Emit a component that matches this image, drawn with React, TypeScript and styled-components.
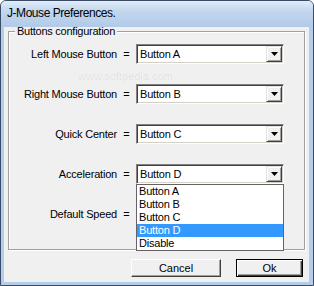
import React from 'react';
import styled, { createGlobalStyle } from 'styled-components';

const GlobalStyle = createGlobalStyle`
  html, body {
    margin: 0;
    padding: 0;
    background: #ffffff;
  }
  body {
    font-family: 'Liberation Sans', Arial, sans-serif;
    font-size: 11px;
    color: #000;
  }
`;

const Window = styled.div`
  position: relative;
  width: 314px;
  height: 286px;
  box-sizing: border-box;
  display: flex;
  flex-direction: column;
  background: #b4cdea;
  border: 1px solid #3b4d66;
  border-radius: 6px 6px 0 0;
  overflow: hidden;
`;

const TitleBar = styled.div`
  height: 26px;
  flex: none;
  display: flex;
  align-items: center;
  padding: 0 0 2px 6px;
  box-sizing: border-box;
  background: linear-gradient(to bottom, #e2edf8 0%, #c4d8ee 35%, #b1cae8 100%);
  font-size: 12px;
  letter-spacing: -0.45px;
  color: #000;
`;

const Client = styled.div`
  flex: 1;
  display: flex;
  flex-direction: column;
  margin: 0 4px 3px 3px;
  background: #f0f0f0;
`;

const Group = styled.fieldset`
  margin: 0 4px 0 4px;
  padding: 9px 0 25px 0;
  border: 1px solid #a0a0a0;
  box-shadow: 1px 1px 0 #fff, inset 1px 1px 0 #fff;
  display: flex;
  flex-direction: column;
  gap: 20px;
  min-width: 0;
`;

const Legend = styled.legend`
  margin-left: 6px;
  padding: 0 2px;
  line-height: 8px;
  background: #f0f0f0;
  letter-spacing: -0.25px;
`;

const Row = styled.div`
  display: flex;
  align-items: center;
  height: 20px;
`;

const Label = styled.div`
  width: 108px;
  text-align: right;
  letter-spacing: -0.2px;
  white-space: nowrap;
`;

const Eq = styled.div`
  width: 19px;
  text-align: center;
`;

const ComboWrap = styled.div`
  position: relative;
  width: 148px;
  height: 20px;
`;

const Combo = styled.div`
  box-sizing: border-box;
  width: 100%;
  height: 100%;
  display: flex;
  align-items: center;
  background: #fff;
  border: 1px solid;
  border-color: #808080 #fff #fff #808080;
  box-shadow: inset 1px 1px 0 #404040, inset -1px -1px 0 #d4d0c8;
  padding: 1px;
`;

const ComboText = styled.div`
  flex: 1;
  padding-left: 2px;
  letter-spacing: -0.2px;
`;

const ArrowBtn = styled.div`
  box-sizing: border-box;
  width: 16px;
  height: 16px;
  display: flex;
  align-items: center;
  justify-content: center;
  background: #f0f0f0;
  border: 1px solid;
  border-color: #e3e3e3 #404040 #404040 #e3e3e3;
  box-shadow: inset 1px 1px 0 #fff, inset -1px -1px 0 #a0a0a0;
`;

const List = styled.div`
  position: absolute;
  top: 100%;
  left: 0;
  width: 148px;
  box-sizing: border-box;
  background: #fff;
  border: 1px solid #646464;
  z-index: 2;
`;

const Item = styled.div<{ $selected?: boolean }>`
  height: 13px;
  line-height: 13px;
  padding-left: 2px;
  letter-spacing: -0.2px;
  background: ${(p) => (p.$selected ? '#3399ff' : 'transparent')};
  color: ${(p) => (p.$selected ? '#fff' : '#000')};
`;

const ButtonBar = styled.div`
  display: flex;
  justify-content: flex-end;
  gap: 15px;
  margin-top: 9px;
  padding-right: 6px;
`;

const Button = styled.div<{ $default?: boolean; $w: number }>`
  box-sizing: border-box;
  width: ${(p) => p.$w}px;
  height: 18px;
  display: flex;
  align-items: center;
  justify-content: center;
  background: #f0f0f0;
  border: 1px solid;
  border-color: ${(p) => (p.$default ? '#000' : '#fff #404040 #404040 #fff')};
  box-shadow: ${(p) =>
    p.$default
      ? 'inset 1px 1px 0 #fff, inset -1px -1px 0 #404040, inset -2px -2px 0 #a0a0a0'
      : 'inset -1px -1px 0 #a0a0a0'};
`;

const WatermarkUrl = styled.div`
  position: absolute;
  top: 69px;
  left: 77px;
  font-size: 11px;
  color: rgba(0, 0, 0, 0.08);
  pointer-events: none;
`;

const Arrow = () => (
  <svg width="7" height="4" viewBox="0 0 7 4">
    <polygon points="0,0 7,0 3.5,4" fill="#000" />
  </svg>
);

const options = ['Button A', 'Button B', 'Button C', 'Button D', 'Disable'];

const rows = [
  { label: 'Left Mouse Button', value: 'Button A' },
  { label: 'Right Mouse Button', value: 'Button B' },
  { label: 'Quick Center', value: 'Button C' },
  { label: 'Acceleration', value: 'Button D', open: true },
  { label: 'Default Speed', value: '' },
];

const App = () => {
  return (
    <>
      <GlobalStyle />
      <Window>
        <TitleBar>J-Mouse Preferences.</TitleBar>
        <Client>
          <Group>
            <Legend>Buttons configuration</Legend>
            {rows.map((r) => (
              <Row key={r.label}>
                <Label>{r.label}</Label>
                <Eq>=</Eq>
                <ComboWrap>
                  <Combo>
                    <ComboText>{r.value}</ComboText>
                    <ArrowBtn>
                      <Arrow />
                    </ArrowBtn>
                  </Combo>
                  {r.open && (
                    <List>
                      {options.map((o) => (
                        <Item key={o} $selected={o === r.value}>
                          {o}
                        </Item>
                      ))}
                    </List>
                  )}
                </ComboWrap>
              </Row>
            ))}
          </Group>
          <ButtonBar>
            <Button $w={90}>Cancel</Button>
            <Button $w={67} $default>
              Ok
            </Button>
          </ButtonBar>
        </Client>
        <WatermarkUrl>www.softpedia.com</WatermarkUrl>
      </Window>
    </>
  );
};

export default App;
